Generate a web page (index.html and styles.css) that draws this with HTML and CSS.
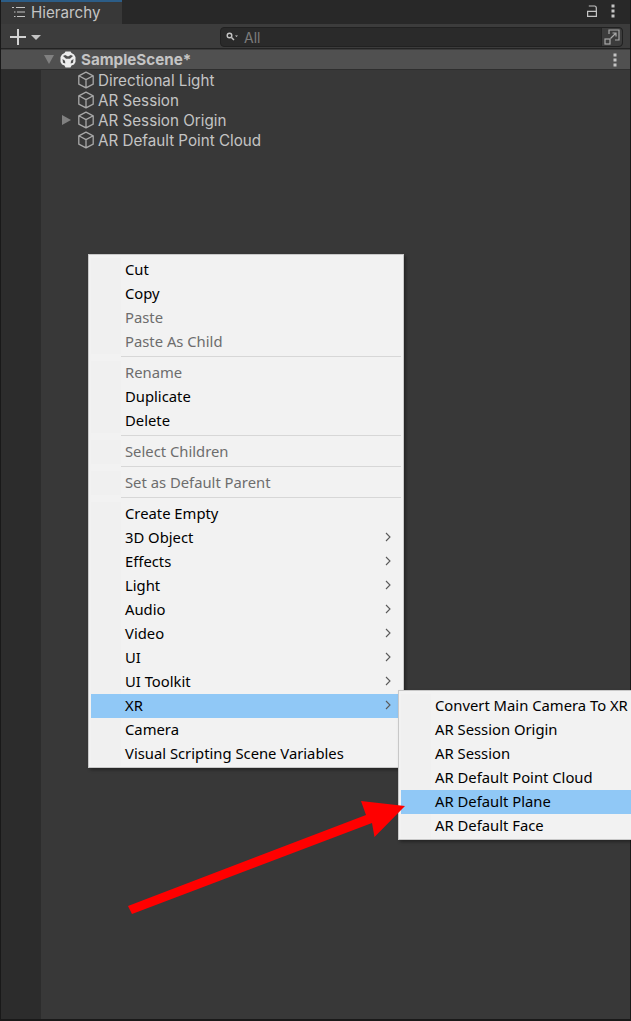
FILE: index.html
```html
<!DOCTYPE html>
<html lang="en">
<head>
<meta charset="utf-8">
<title>Hierarchy</title>
<link rel="stylesheet" href="styles.css">
</head>
<body>
<svg width="0" height="0" class="defs">
  <symbol id="cube" viewBox="0 0 18 18">
    <path d="M9 1.200 16.200 4.800V13.200L9 16.800 1.800 13.200V4.800Z M1.800 4.800 9 8.600 16.200 4.800 M9 8.600V16.800" fill="none" stroke="#a8a8a8" stroke-width="1.300" stroke-linejoin="round"/>
  </symbol>
  <symbol id="kebab" viewBox="0 0 4 14">
    <rect x="0.500" y="0.500" width="3" height="3" fill="#c4c4c4"/>
    <rect x="0.500" y="5.500" width="3" height="3" fill="#c4c4c4"/>
    <rect x="0.500" y="10.500" width="3" height="3" fill="#c4c4c4"/>
  </symbol>
  <symbol id="chev" viewBox="0 0 6 10">
    <path d="M1 1 5 5 1 9" fill="none" stroke="#5a5a5a" stroke-width="1.100"/>
  </symbol>
</svg>
<main class="panel">
  <header class="tabbar">
    <div class="tab">
      <svg class="tab-icon" width="14" height="12" viewBox="0 0 14 12"><path d="M0 1.500h2M4 1.500h9M2 6h1.500M5 6h8M2 10.500h1.500M5 10.500h8" stroke="#c4c4c4" stroke-width="1.200" fill="none"/></svg>
      <span>Hierarchy</span>
    </div>
    <div class="tab-actions">
      <svg width="10" height="12" viewBox="0 0 10 12"><path d="M0.600 6.300H9.400V11.400H0.600Z M1.800 1H7.500Q9.300 1 9.300 3V6.300" fill="none" stroke="#c4c4c4" stroke-width="1.200"/></svg>
      <svg width="4" height="14"><use href="#kebab"/></svg>
    </div>
  </header>
  <div class="toolbar">
    <div class="add">
      <svg width="16" height="16" viewBox="0 0 16 16"><path d="M8 0V16M0 8H16" stroke="#d2d2d2" stroke-width="2"/></svg>
      <span class="add-caret"></span>
    </div>
    <div class="search">
      <svg class="search-icon" width="12" height="10" viewBox="0 0 12 10"><circle cx="3.500" cy="3.500" r="2.300" fill="none" stroke="#c4c4c4" stroke-width="1.400"/><path d="M5.500 5.500 8 8" stroke="#c4c4c4" stroke-width="1.500"/><path d="M9 3.500h3L10.500 5Z" fill="#c4c4c4"/></svg>
      <span class="search-text">All</span>
      <span class="search-btn">
        <svg width="16" height="16" viewBox="0 0 16 16"><path d="M5 5V1H15V11H11" fill="none" stroke="#a8a8a8" stroke-width="1.200"/><rect x="1" y="10" width="5" height="5" fill="none" stroke="#a8a8a8" stroke-width="1.200"/><path d="M6.500 9.500 11.500 4.500 M8.500 4H12V7.500" fill="none" stroke="#a8a8a8" stroke-width="1.200"/></svg>
      </span>
    </div>
  </div>
  <div class="scene-row">
    <span class="scene-caret"></span>
    <svg class="scene-logo" width="16" height="17" viewBox="0 0 16 17">
      <path d="M5.500 0.500H10.500L11.500 2 14 3.500 15.500 6V11L14 13.500 11.500 14.500 10.500 16.500H5.500L4.500 14.500 2 13.500 0.500 11V6L2 3.500 4.500 2Z" fill="#ececec"/>
      <path d="M3 5 6 7.800H10L13 5 10.800 4 8 5.500 5.200 4Z M2.500 8 5 9.800 5.300 12.500 3 11.800Z M13.500 8 11 9.800 10.700 12.500 13 11.800Z" fill="#505050"/>
    </svg>
    <span class="scene-name">SampleScene*</span>
    <svg class="scene-menu" width="4" height="14"><use href="#kebab"/></svg>
  </div>
  <div class="tree-area">
    <div class="gutter"></div>
    <ul class="tree">
      <li class="tree-row"><span class="fold"></span><svg class="cube" width="18" height="18"><use href="#cube"/></svg><span>Directional Light</span></li>
      <li class="tree-row"><span class="fold"></span><svg class="cube" width="18" height="18"><use href="#cube"/></svg><span>AR Session</span></li>
      <li class="tree-row"><span class="fold closed"></span><svg class="cube" width="18" height="18"><use href="#cube"/></svg><span>AR Session Origin</span></li>
      <li class="tree-row"><span class="fold"></span><svg class="cube" width="18" height="18"><use href="#cube"/></svg><span>AR Default Point Cloud</span></li>
    </ul>
  </div>
</main>

<nav class="menu menu-main">
  <div class="item">Cut</div>
  <div class="item">Copy</div>
  <div class="item off">Paste</div>
  <div class="item off">Paste As Child</div>
  <div class="sep"></div>
  <div class="item off">Rename</div>
  <div class="item">Duplicate</div>
  <div class="item">Delete</div>
  <div class="sep"></div>
  <div class="item off">Select Children</div>
  <div class="sep"></div>
  <div class="item off">Set as Default Parent</div>
  <div class="sep"></div>
  <div class="item">Create Empty</div>
  <div class="item">3D Object<svg class="chev" width="6" height="10"><use href="#chev"/></svg></div>
  <div class="item">Effects<svg class="chev" width="6" height="10"><use href="#chev"/></svg></div>
  <div class="item">Light<svg class="chev" width="6" height="10"><use href="#chev"/></svg></div>
  <div class="item">Audio<svg class="chev" width="6" height="10"><use href="#chev"/></svg></div>
  <div class="item">Video<svg class="chev" width="6" height="10"><use href="#chev"/></svg></div>
  <div class="item">UI<svg class="chev" width="6" height="10"><use href="#chev"/></svg></div>
  <div class="item">UI Toolkit<svg class="chev" width="6" height="10"><use href="#chev"/></svg></div>
  <div class="item active">XR<svg class="chev" width="6" height="10"><use href="#chev"/></svg></div>
  <div class="item">Camera</div>
  <div class="item">Visual Scripting Scene Variables</div>
</nav>

<nav class="menu menu-sub">
  <div class="item">Convert Main Camera To XR</div>
  <div class="item">AR Session Origin</div>
  <div class="item">AR Session</div>
  <div class="item">AR Default Point Cloud</div>
  <div class="item active">AR Default Plane</div>
  <div class="item">AR Default Face</div>
</nav>

<svg class="arrow" width="631" height="1021" viewBox="0 0 631 1021">
  <polygon fill="#ff0000" points="128,906 366,815 361,801 405,806 374.500,837 372,823 132,914"/>
</svg>
</body>
</html>
```
FILE: styles.css
```css
html, body {
  margin: 0;
  padding: 0;
  width: 631px;
  height: 1021px;
  overflow: hidden;
  background: #191919;
}
.defs { position: absolute; }
.panel {
  width: 629px;
  height: 1019px;
  margin-left: 1px;
  display: flex;
  flex-direction: column;
  background: #383838;
  font-family: Inter, "Liberation Sans", sans-serif;
  font-size: 15.2px;
  color: #c4c4c4;
}
.tabbar {
  height: 24px;
  flex: none;
  display: flex;
  justify-content: space-between;
  background: #282828;
}
.tab {
  width: 110px;
  height: 22px;
  border-top: 2px solid #2c5d87;
  background: #383838;
  display: flex;
  align-items: center;
  padding: 0 0 2px 11px;
  box-sizing: content-box;
  height: 20px;
  gap: 5px;
}
.tab-actions {
  display: flex;
  align-items: center;
  gap: 14px;
  padding: 0 15px 2px 0;
}
.toolbar {
  height: 25px;
  box-sizing: border-box;
  flex: none;
  display: flex;
  align-items: center;
  justify-content: space-between;
  background: #3c3c3c;
  border-bottom: 1px solid #232323;
  padding: 2px 7px 0 9px;
}
.add {
  display: flex;
  align-items: center;
  gap: 5px;
}
.add-caret {
  width: 0;
  height: 0;
  border-left: 5px solid transparent;
  border-right: 5px solid transparent;
  border-top: 5px solid #c4c4c4;
}
.search {
  width: 403px;
  height: 20px;
  box-sizing: border-box;
  display: flex;
  align-items: center;
  background: #2a2a2a;
  border: 1px solid #212121;
  border-radius: 4px;
  padding-left: 5px;
  font-size: 14px;
  color: #7c7c7c;
}
.search-icon { flex: none; margin-right: 6px; }
.search-text { flex: 1; }
.search-btn {
  width: 20px;
  height: 18px;
  background: #3c3c3c;
  border-left: 1px solid #242424;
  border-radius: 0 4px 4px 0;
  display: flex;
  align-items: center;
  justify-content: center;
}
.scene-row {
  height: 21px;
  box-sizing: border-box;
  flex: none;
  display: flex;
  align-items: center;
  background: #505050;
  border-top: 1px solid #3c3c3c;
  border-bottom: 1px solid #2e2e2e;
  padding-left: 43px;
  font-weight: 700;
  color: #c4c4c4;
}
.scene-caret {
  width: 0;
  height: 0;
  border-left: 5.500px solid transparent;
  border-right: 5.500px solid transparent;
  border-top: 9px solid #808080;
  margin-right: 6px;
}
.scene-logo { margin-right: 5px; }
.scene-name { flex: 1; }
.scene-menu { margin-right: 13px; }
.tree-area {
  flex: 1;
  display: flex;
}
.gutter {
  width: 40px;
  background: #2c2c2c;
}
.tree {
  list-style: none;
  margin: 0;
  padding: 0;
}
.tree-row {
  height: 20px;
  display: flex;
  align-items: center;
  padding-left: 21px;
}
.fold {
  width: 15px;
  flex: none;
  display: block;
}
.fold.closed::before {
  content: "";
  display: block;
  width: 0;
  height: 0;
  border-top: 5px solid transparent;
  border-bottom: 5px solid transparent;
  border-left: 9px solid #808080;
}
.cube { flex: none; margin-right: 3px; }
.menu {
  position: absolute;
  box-sizing: border-box;
  background: #f2f2f2;
  border: 1px solid #c8c8c8;
  padding: 3px 2px;
  font-family: "Noto Sans", "Open Sans", sans-serif;
  font-size: 14.8px;
  color: #000;
  box-shadow: 2px 2px 3px rgba(0, 0, 0, 0.35);
  white-space: nowrap;
}
.menu-main {
  left: 88px;
  top: 254px;
  width: 316px;
  height: 514px;
}
.menu-sub {
  left: 398px;
  top: 690px;
  right: 0;
  height: 150px;
  padding-right: 0;
  border-right: 0;
}
.item {
  height: 24px;
  line-height: 22px;
  padding-left: 34px;
  position: relative;
  background: linear-gradient(to right, #f0f0f0 30px, transparent 30px);
}
.item.off { color: #6d6d6d; }
.item.active { background: #90c8f6; }
.chev {
  position: absolute;
  right: 10px;
  top: 6px;
}
.sep {
  height: 7px;
  box-sizing: border-box;
  margin-left: 30px;
  background: linear-gradient(#d7d7d7, #d7d7d7) no-repeat 0 2px / 100% 1px;
}
.arrow {
  position: absolute;
  left: 0;
  top: 0;
  pointer-events: none;
}
```
